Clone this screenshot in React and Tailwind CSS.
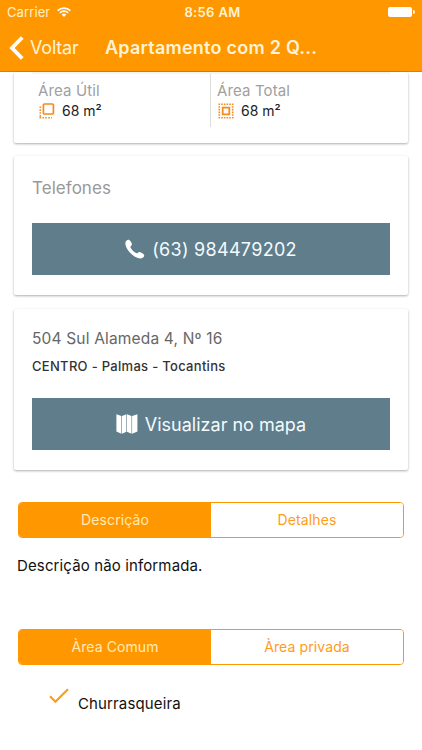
import { useState } from 'react'

const CARD = 'mx-[14px] rounded-[2px] bg-white px-[18px] shadow-[0_1px_2.5px_rgba(0,0,0,0.32)]'

function PhoneIcon({ className }) {
  return (
    <svg viewBox="0 0 20 20" className={className} fill="currentColor">
      <path d="M1.1 2.1C2 1 3.300.4 4.300.9c1 .6 2.100 2.400 2.500 3.700.3 1.100-.2 1.900-1 2.600-.5.5-.5.9-.2 1.500.5 1 1.400 2.200 2.500 3.200 1 .9 2.100 1.700 3.100 2.200.6.3 1 .3 1.500-.2.8-.8 1.600-1.100 2.700-.7 1.300.5 2.900 1.500 3.600 2.500.5.9.1 2.100-.9 2.900-1.200 1-3.100 1.300-5.300.5-2.700-1-5.400-3-7.700-5.300S1.300 8.800.6 6.300C.2 4.700.3 3.100 1.100 2.100z" />
    </svg>
  )
}

function MapIcon({ className }) {
  return (
    <svg viewBox="0 0 22 20" className={className} fill="currentColor">
      <path d="M.4.2 5.400 2v17.800L.4 17.600zM6 2l4.400-1.700v17.500L6 19.800zM11 .3 15.500 2v17.800L11 17.800zM16.100 2 21.400.2v17.400l-5.300 2.200z" />
    </svg>
  )
}

function UsefulAreaIcon({ className }) {
  return (
    <svg viewBox="0 0 18 18" className={className} fill="none" stroke="currentColor">
      <rect x="5.4" y="2" width="10" height="10" rx="1" strokeWidth="1.7" />
      <path d="M2.3 4.4v11.300M1.500 15.700h12.500" strokeWidth="1.6" strokeDasharray="1.6 1.300" />
    </svg>
  )
}

function TotalAreaIcon({ className }) {
  return (
    <svg viewBox="0 0 18 18" className={className} fill="none" stroke="currentColor">
      <path d="M1.500 2.300h15M1.500 15.700h15M2.300 1.500v15M15.700 1.500v15" strokeWidth="1.6" strokeDasharray="1.6 1.080" />
      <path d="M5.700 5.700h6.600v6.600H5.700z" strokeWidth="1.8" />
    </svg>
  )
}

function CheckIcon({ className }) {
  return (
    <svg viewBox="0 0 24 24" className={className} fill="none" stroke="currentColor" strokeWidth="2.2">
      <path d="M3 12.300 8.400 17.700 21 5.200" />
    </svg>
  )
}

const AREAS = [
  { label: 'Área Útil', value: '68 m²', Icon: UsefulAreaIcon },
  { label: 'Área Total', value: '68 m²', Icon: TotalAreaIcon },
]

function StatusBar() {
  return (
    <div className="grid h-6 grid-cols-3 items-center pl-[7px] pr-[7px]">
      <div className="flex items-center gap-[7px] text-[13px] leading-none tracking-[0.1px] text-[#fff0c8]">
        Carrier
        <svg viewBox="0 0 14 10" className="h-[10px] w-[14px]" fill="none" stroke="#fff" strokeWidth="1.8">
          <path d="M.7 3.6a9 9 0 0 1 12.600 0M2.900 5.900a5.800 5.800 0 0 1 8.200 0" />
          <path d="M7 9.900 4.700 7.600a3.200 3.200 0 0 1 4.600 0z" fill="#fff" stroke="none" />
        </svg>
      </div>
      <p className="ml-[3px] text-center text-[13px] font-semibold leading-none tracking-[0.35px] text-[#fff3d6]">8:56 AM</p>
      <div className="flex items-center justify-end gap-px">
        <span className="h-[10px] w-[24px] rounded-[2px] bg-white" />
        <span className="h-1 w-[2px] rounded-r-full bg-white" />
      </div>
    </div>
  )
}

function NavBar({ title }) {
  return (
    <div className="flex h-[47px] items-center pl-[9px]">
      <button className="flex w-[71px] shrink-0 items-center text-[18px] leading-none tracking-[-0.2px] text-[#fff3d6]">
        <svg viewBox="0 0 15 24" className="mr-[6px] h-6 w-[15px]" fill="none" stroke="#fff" strokeWidth="3.8">
          <path d="M13.200 1.500 3 12l10.200 10.500" />
        </svg>
        Voltar
      </button>
      <h1 className="ml-[25px] whitespace-nowrap text-[18px] font-semibold leading-none tracking-[0.24px] text-[#fff3d6]">{title}</h1>
    </div>
  )
}

function ActionButton({ icon, children }) {
  return (
    <button className="flex h-[52px] w-full items-center justify-center gap-[7px] bg-[#607d8b] text-[18px] text-[#f3fbff]">
      {icon}
      {children}
    </button>
  )
}

function Segment({ options }) {
  const [active, setActive] = useState(options[0])
  return (
    <div className="ml-[18px] grid h-9 w-[386px] grid-cols-2 overflow-hidden rounded-[4px] border border-[#ff9800]">
      {options.map(o => (
        <button
          key={o}
          onClick={() => setActive(o)}
          className={`pb-[2px] text-[14px] tracking-[0.1px] ${active === o ? 'bg-[#ff9800] text-[#ffeab8]' : 'bg-white text-[#ff9c1a]'}`}
        >
          {o}
        </button>
      ))}
    </div>
  )
}

export default function App() {
  return (
    <div className="h-[750px] w-[422px] overflow-hidden bg-white font-['Inter',sans-serif]">
      <header className="h-[72px] border-b border-[#d98200] bg-[#ff9800]">
        <StatusBar />
        <NavBar title="Apartamento com 2 Q..." />
      </header>

      <section className={`${CARD} h-[71px]`}>
        <div className="grid grid-cols-2 border-t-2 border-[#f4f4f4]">
          {AREAS.map(({ label, value, Icon }, i) => (
            <div key={label} className={`h-[53px] pt-[8px] pl-[6px] ${i === 0 ? 'border-r border-[#dedede]' : ''}`}>
              <p className="text-[15px] leading-[18px] tracking-[0.12px] text-[#a0a0a0]">{label}</p>
              <div className="mt-[2px] flex items-center gap-[6px] text-[14px] leading-[18px] text-[#222]">
                <Icon className="size-[18px] text-[#f58b1e]" />
                {value}
              </div>
            </div>
          ))}
        </div>
      </section>

      <section className={`${CARD} mt-[13px] h-[139px] pt-[20px]`}>
        <h2 className="mb-[23px] text-[17px] leading-6 tracking-[0.05px] text-[#999]">Telefones</h2>
        <ActionButton icon={<PhoneIcon className="size-5 text-white" />}>
          <span className="tracking-[0.3px]">(63) 984479202</span>
        </ActionButton>
      </section>

      <section className={`${CARD} mt-[14px] h-[161px] pt-[20px]`}>
        <p className="text-[15.5px] leading-5 tracking-[0.17px] text-[#666]">504 Sul Alameda 4, Nº 16</p>
        <p className="mt-[8px] mb-[23px] text-[13px] font-medium leading-[18px] tracking-[0.3px] text-[#333]">CENTRO - Palmas - Tocantins</p>
        <ActionButton icon={<MapIcon className="h-5 w-[22px] text-white" />}>Visualizar no mapa</ActionButton>
      </section>

      <div className="mt-[32px]">
        <Segment options={['Descrição', 'Detalhes']} />
        <p className="ml-[17px] mt-[18px] text-[15px] leading-5 tracking-[0.13px] text-[#111]">Descrição não informada.</p>
      </div>

      <div className="mt-[53px]">
        <Segment options={['Àrea Comum', 'Àrea privada']} />
        <div className="ml-[47px] mt-[19px] flex items-start gap-[7px]">
          <CheckIcon className="size-6 text-[#ff9c1a]" />
          <p className="mt-[10px] text-[15px] leading-5 tracking-[0.13px] text-[#111]">Churrasqueira</p>
        </div>
      </div>
    </div>
  )
}
